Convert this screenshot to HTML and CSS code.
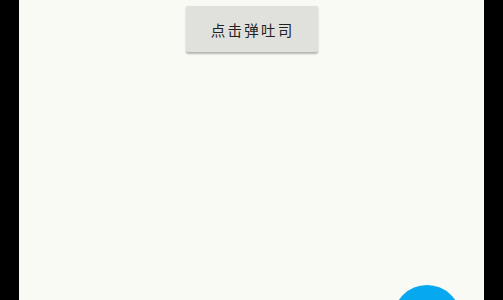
FILE: index.html
```html
<!DOCTYPE html>
<html lang="zh">
<head>
<meta charset="utf-8">
<link rel="stylesheet" href="styles.css">
</head>
<body>
<div class="screen">
  <div class="top">
    <button class="toast-btn">点击弹吐司</button>
  </div>
  <div class="fab"></div>
</div>
</body>
</html>
```
FILE: styles.css
```css
html, body {
  margin: 0;
  padding: 0;
  height: 100%;
  background: #000;
  overflow: hidden;
}
.screen {
  position: relative;
  width: 465px;
  height: 300px;
  margin: 0 auto;
  background: #fafaf5;
  overflow: hidden;
}
.top {
  display: flex;
  justify-content: center;
  padding-top: 6px;
}
.toast-btn {
  width: 132px;
  height: 46px;
  border: none;
  border-radius: 2px;
  background: #e0e0dc;
  box-shadow: 0 1.5px 2px rgba(0,0,0,0.28);
  font-family: "Noto Sans CJK SC", "Noto Sans", sans-serif;
  font-size: 14.5px;
  font-weight: 400;
  letter-spacing: 2.2px;
  color: #222;
  padding: 0;
  text-indent: 2.2px;
}
.fab {
  position: absolute;
  left: 374px;
  top: 285px;
  width: 68px;
  height: 68px;
  border-radius: 50%;
  background: #06a8f0;
}
```
